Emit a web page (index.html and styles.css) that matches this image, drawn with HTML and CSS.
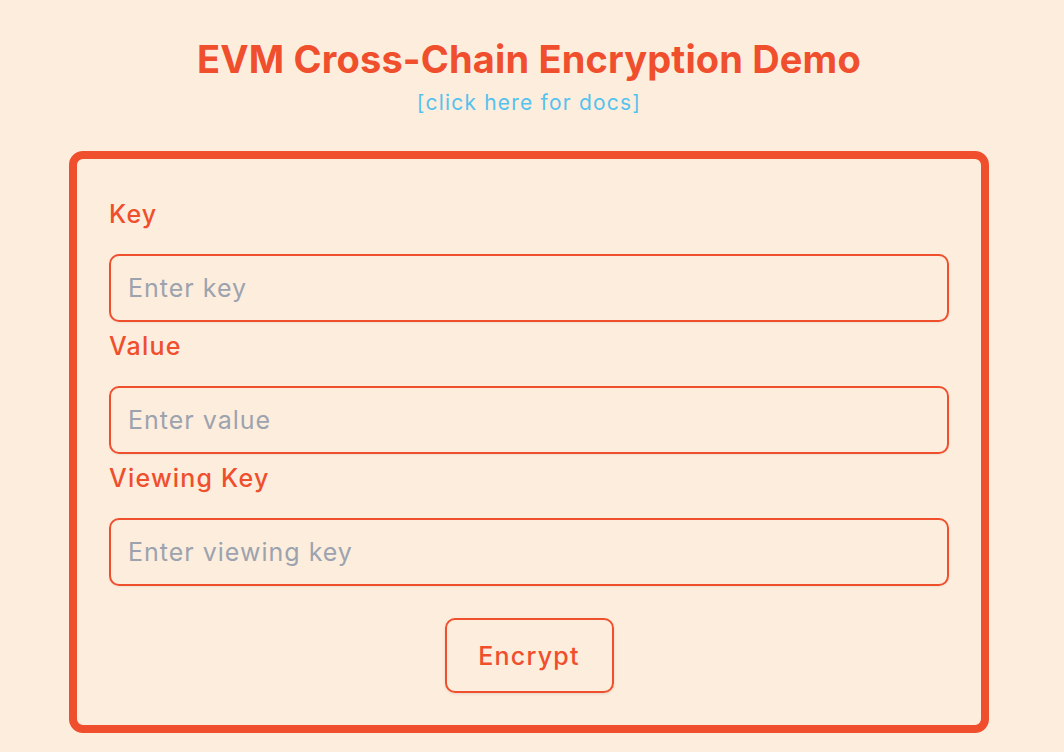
FILE: index.html
```html
<!DOCTYPE html>
<html lang="en">
<head>
<meta charset="utf-8">
<title>EVM Cross-Chain Encryption Demo</title>
<link rel="stylesheet" href="styles.css">
</head>
<body>
<main class="page">
  <header class="header">
    <h1 class="title">EVM Cross-Chain Encryption Demo</h1>
    <a class="docs" href="#">[click here for docs]</a>
  </header>
  <form class="card">
    <div class="field">
      <label class="label" for="key">Key</label>
      <input class="input" id="key" type="text" placeholder="Enter key">
    </div>
    <div class="field">
      <label class="label" for="value">Value</label>
      <input class="input" id="value" type="text" placeholder="Enter value">
    </div>
    <div class="field">
      <label class="label" for="vk">Viewing Key</label>
      <input class="input" id="vk" type="text" placeholder="Enter viewing key">
    </div>
    <div class="actions">
      <button class="btn" type="button">Encrypt</button>
    </div>
  </form>
</main>
</body>
</html>
```
FILE: styles.css
```css
* { box-sizing: border-box; }
html, body { margin: 0; padding: 0; }
body {
  background: #fdeddd;
  font-family: Inter, "Noto Sans", sans-serif;
  color: #ef4f2d;
  padding-right: 6px;
}
.page {
  display: flex;
  flex-direction: column;
  align-items: center;
  padding-top: 36px;
}
.header {
  display: flex;
  flex-direction: column;
  align-items: center;
  gap: 7px;
}
.title {
  margin: 0;
  font-size: 38px;
  line-height: 46px;
  font-weight: 700;
  color: #ef4f2d;
  letter-spacing: 0.15px;
}
.docs {
  font-size: 21px;
  line-height: 28px;
  color: #55c2ee;
  text-decoration: none;
  letter-spacing: 1.2px;
}
.card {
  margin-top: 34px;
  width: 920px;
  border: 8px solid #ef4f2d;
  border-radius: 14px;
  padding: 39px 32px 32px;
  display: flex;
  flex-direction: column;
}
.field {
  display: flex;
  flex-direction: column;
  gap: 24px;
}
.field + .field { margin-top: 8px; }
.label {
  font-size: 25px;
  line-height: 32px;
  font-weight: 500;
  color: #ef4f2d;
  letter-spacing: 1.2px;
}
.input {
  height: 68px;
  width: 100%;
  border: 2px solid #ef4f2d;
  border-radius: 10px;
  background: transparent;
  padding: 0 17px;
  font-family: inherit;
  font-size: 25px;
  letter-spacing: 1px;
  color: #374151;
  box-shadow: 0 1px 2px rgba(0,0,0,0.06);
  outline: none;
}
.input::placeholder { color: #9ca3af; }
.actions {
  display: flex;
  justify-content: center;
  margin-top: 32px;
}
.btn {
  width: 169px;
  height: 75px;
  border: 2px solid #ef4f2d;
  border-radius: 10px;
  background: transparent;
  font-family: inherit;
  font-size: 25px;
  font-weight: 500;
  letter-spacing: 1.2px;
  color: #ef4f2d;
  box-shadow: 0 1px 3px rgba(0,0,0,0.1);
  cursor: pointer;
}
```
